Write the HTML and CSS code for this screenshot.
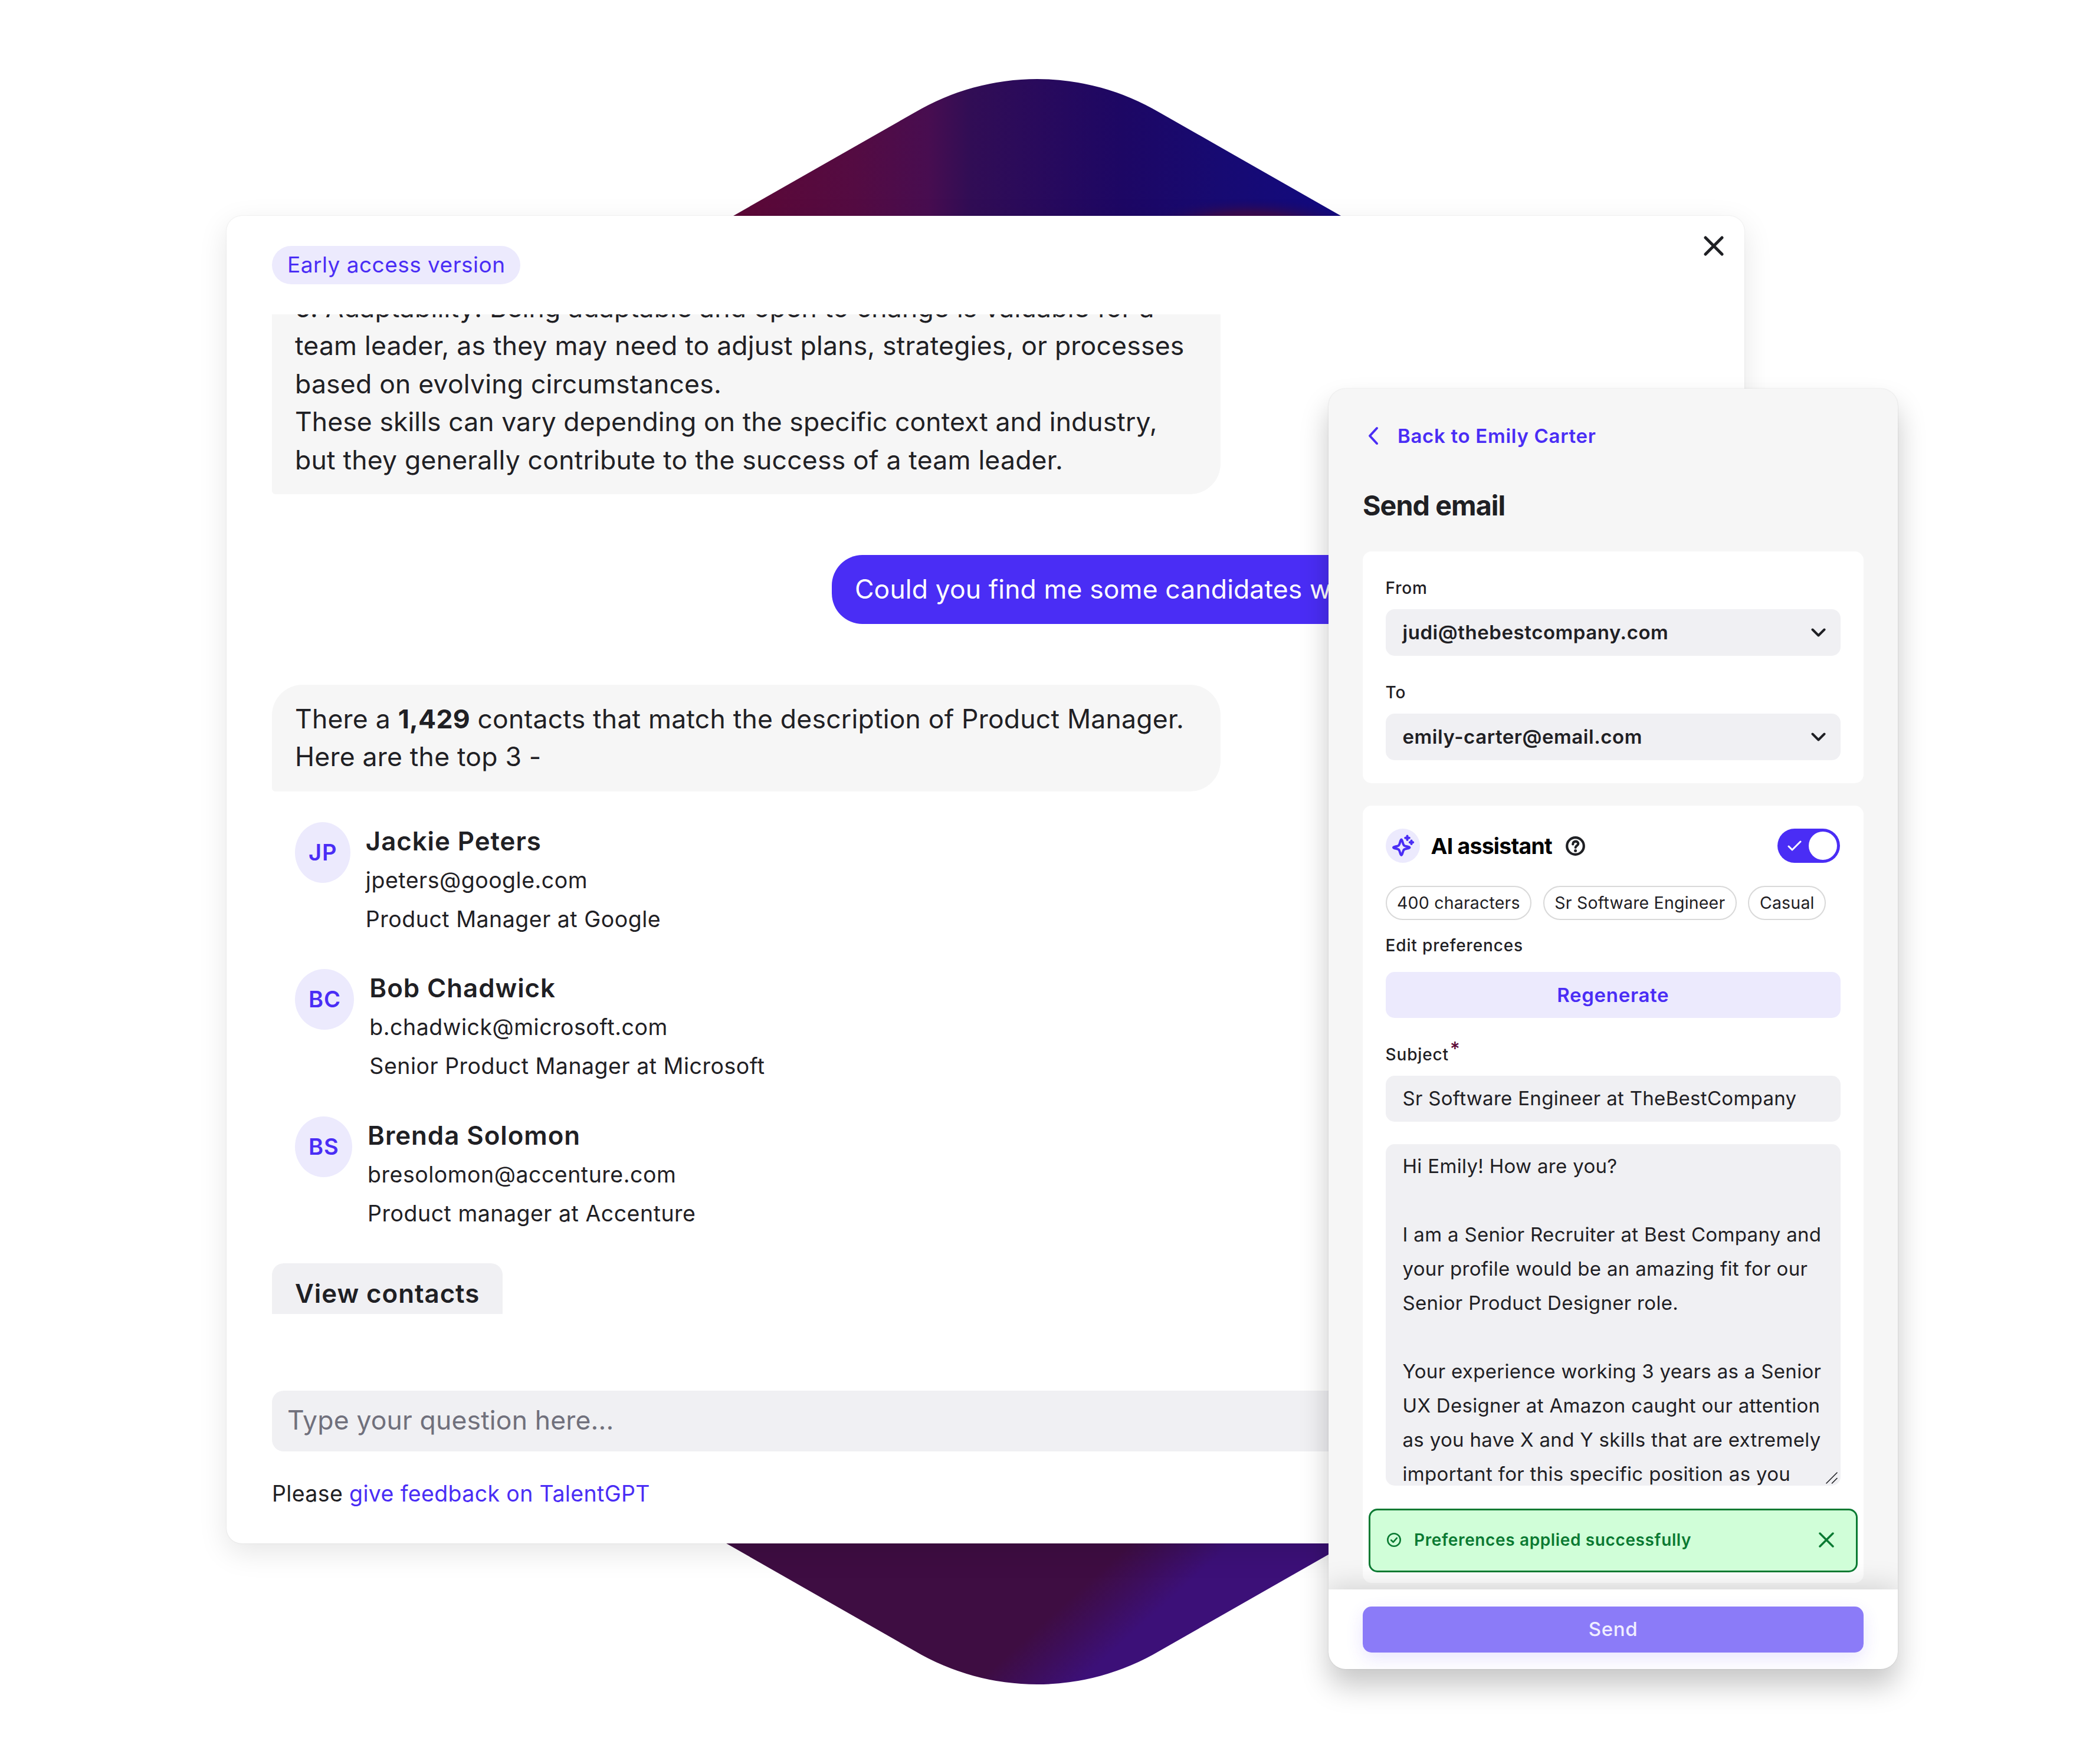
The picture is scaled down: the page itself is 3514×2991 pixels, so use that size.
FILE: index.html
```html
<!DOCTYPE html>
<html lang="en">
<head>
<meta charset="utf-8">
<title>TalentGPT</title>
<link rel="stylesheet" href="styles.css">
</head>
<body>
<main class="stage">
  <svg class="backdrop" viewBox="0 0 3514 2991" aria-hidden="true">
    <defs>
      <linearGradient id="upper" gradientUnits="userSpaceOnUse" x1="1243" y1="0" x2="2273" y2="0">
        <stop offset="0" stop-color="#5c0836"/>
        <stop offset=".2" stop-color="#540b42"/>
        <stop offset=".32" stop-color="#480d50"/>
        <stop offset=".39" stop-color="#310d55"/>
        <stop offset=".5" stop-color="#290a5c"/>
        <stop offset=".64" stop-color="#1d0764"/>
        <stop offset=".8" stop-color="#170a72"/>
        <stop offset="1" stop-color="#120a80"/>
      </linearGradient>
      <linearGradient id="lower" gradientUnits="userSpaceOnUse" x1="1864" y1="2664" x2="1942" y2="2750">
        <stop offset="0" stop-color="#3e0d42"/>
        <stop offset=".5" stop-color="#3d0e5c"/>
        <stop offset="1" stop-color="#3c1078"/>
      </linearGradient>
      <radialGradient id="glow" gradientUnits="userSpaceOnUse" cx="0" cy="0" r="1" gradientTransform="translate(2115 382) scale(180 46)">
        <stop offset="0" stop-color="#560a36"/>
        <stop offset=".5" stop-color="#3c0a48" stop-opacity=".8"/>
        <stop offset="1" stop-color="#1a0a6a" stop-opacity="0"/>
      </radialGradient>
      <clipPath id="hex"><path d="M1550 191A408 408 0 0 1 1966 191L2616 561.500V2428L1966 2799A408 408 0 0 1 1550 2799L900 2428V561.500Z"/></clipPath>
    </defs>
    <g clip-path="url(#hex)">
      <rect x="900" y="100" width="1716" height="1400" fill="url(#upper)"/>
      <rect x="1900" y="320" width="420" height="120" fill="url(#glow)"/>
      <rect x="900" y="1500" width="1716" height="1400" fill="url(#lower)"/>
    </g>
  </svg>

  <section class="chat">
    <header class="chat-head">
      <span class="badge">Early access version</span>
      <svg class="close" viewBox="0 0 34 34"><path d="M3 3L31 31M31 3L3 31"/></svg>
    </header>
    <div class="thread">
      <p class="msg msg-first">5. Adaptability: Being adaptable and open to change is valuable for a<br>team leader, as they may need to adjust plans, strategies, or processes<br>based on evolving circumstances.<br><span class="snug">These skills can vary depending on the specific context and industry,</span><br>but they generally contribute to the success of a team leader.</p>
      <p class="msg msg-own">Could you find me some candidates with</p>
      <p class="msg">There a <b>1,429</b> contacts that match the description of Product Manager.<br>Here are the top 3 -</p>
      <ul class="contacts">
        <li><span class="avatar">JP</span><div><h3>Jackie Peters</h3><p>jpeters@google.com</p><p>Product Manager at Google</p></div></li>
        <li><span class="avatar">BC</span><div><h3>Bob Chadwick</h3><p>b.chadwick@microsoft.com</p><p>Senior Product Manager at Microsoft</p></div></li>
        <li><span class="avatar">BS</span><div><h3>Brenda Solomon</h3><p>bresolomon@accenture.com</p><p>Product manager at Accenture</p></div></li>
      </ul>
      <button class="view">View contacts</button>
    </div>
    <div class="ask">Type your question here...</div>
    <p class="feedback">Please <a>give feedback on TalentGPT</a></p>
  </section>

  <section class="panel">
    <div class="panel-body">
      <a class="back"><svg viewBox="0 0 20 32"><path d="M16 3L4 16L16 29"/></svg><span>Back to Emily Carter</span></a>
      <h2>Send email</h2>
      <div class="card">
        <label class="label">From</label>
        <div class="select"><span>judi@thebestcompany.com</span><svg viewBox="0 0 25 15"><path d="M2.500 2.500L12.500 12.500L22.500 2.500"/></svg></div>
        <label class="label label-next">To</label>
        <div class="select"><span>emily-carter@email.com</span><svg viewBox="0 0 25 15"><path d="M2.500 2.500L12.500 12.500L22.500 2.500"/></svg></div>
      </div>
      <div class="card card-compose">
        <div class="assistant">
          <span class="spark"><svg viewBox="0 0 58 58"><path class="star" d="M26.500 18.500C28.500 18.500 28.500 26 31 28.500C33.500 30.500 40.500 30 40.500 32C40.500 34 33.500 33.500 31 35.500C28.500 38 28.500 45 26.500 45C24.500 45 24.500 38 22 35.500C19.500 33.500 13 34 13 32C13 30 19.500 30.500 22 28.500C24.500 26 24.500 18.500 26.500 18.500Z"/><path d="M36.500 12.500V19M33.200 15.800H39.800M43.500 20.500V26M40.800 23.300H46.200"/></svg></span>
          <h3>AI assistant</h3>
          <svg class="help" viewBox="0 0 33 33"><circle cx="16.500" cy="16.500" r="14.300"/><path d="M12.200 13.400C12.200 7 21.300 7.300 21.300 12.600C21.300 16.200 16.700 15.800 16.700 19"/><circle class="dot" cx="16.600" cy="24.400" r="2.500"/></svg>
          <span class="toggle"><svg viewBox="0 0 24 18"><path d="M2 10L8 16L22 2"/></svg><i></i></span>
        </div>
        <div class="chips"><span>400 characters</span><span>Sr Software Engineer</span><span>Casual</span></div>
        <p class="label edit">Edit preferences</p>
        <button class="regen">Regenerate</button>
        <label class="label subject">Subject<sup>*</sup></label>
        <div class="field">Sr Software Engineer at TheBestCompany</div>
        <div class="message">Hi Emily! How are you?<br><br>I am a Senior Recruiter at Best Company and<br>your profile would be an amazing fit for our<br>Senior Product Designer role.<br><br>Your experience working 3 years as a Senior<br>UX Designer at Amazon caught our attention<br>as you have X and Y skills that are extremely<br>important for this specific position as you<svg class="grip" viewBox="0 0 20 20"><path d="M1 19L19 1M10.500 19L19 10.500"/></svg></div>
      </div>
    </div>
    <div class="toast">
      <svg viewBox="0 0 24 24"><circle cx="12" cy="12" r="10.700"/><path d="M7.200 12.500L10.700 15.800L16.800 8.800"/></svg>
      <span>Preferences applied successfully</span>
      <svg class="x" viewBox="0 0 26 26"><path d="M2 2L24 24M24 2L2 24"/></svg>
    </div>
    <footer class="panel-foot"><button class="send">Send</button></footer>
  </section>
</main>
</body>
</html>
```
FILE: styles.css
```css
* { box-sizing: border-box; margin: 0; padding: 0; }
body { background: #fff; font-family: Inter, "Liberation Sans", sans-serif; color: #1f2024; }
button { border: 0; font: inherit; letter-spacing: inherit; color: inherit; display: block; }
ul { list-style: none; }
svg { display: block; fill: none; stroke: currentColor; stroke-linecap: round; stroke-linejoin: round; flex: none; }
.stage { position: relative; width: 3514px; height: 2991px; overflow: hidden; background: #fff; }
.backdrop { position: absolute; inset: 0; width: 3514px; height: 2991px; stroke: none; }

/* chat window */
.chat { position: absolute; left: 384px; top: 366px; width: 2573px; height: 2251px; padding: 0 77px; border-radius: 26px; background: #fff; box-shadow: 0 15px 50px rgba(0,0,0,.1), 0 0 2px rgba(0,0,0,.12); }
.chat-head { display: flex; justify-content: space-between; align-items: flex-start; height: 167px; padding-top: 34px; margin-right: -42px; }
.badge { margin-top: 17px; height: 65px; line-height: 64px; padding: 0 26px; border-radius: 33px; background: #eceafd; color: #4a2df5; font-size: 37px; letter-spacing: .47px; }
.close { width: 34px; height: 34px; stroke-width: 5; }
.thread { height: 1695px; overflow: hidden; }
.msg { width: 1608px; padding: 26px 39px; font-size: 44.5px; line-height: 64.5px; letter-spacing: .21px; white-space: nowrap; background: #f6f6f6; border-radius: 52px 52px 52px 6px; }
.msg b { font-weight: 650; }
.msg .snug { letter-spacing: .08px; }
.msg-first { margin-top: -69.5px; }
.msg-own { width: 1470px; margin: 103px 0 103px auto; border-radius: 52px 52px 6px 52px; background: #4a2df5; color: #fff; letter-spacing: .1px; }
.contacts { margin-top: 52px; padding-left: 39px; }
.contacts li { display: flex; gap: 26px; height: 249.5px; }
.avatar { height: 103px; line-height: 103px; padding: 0 22.5px 0 23px; border-radius: 50%; background: #eceafd; color: #4a2df5; font-size: 38px; font-weight: 600; letter-spacing: .9px; }
.contacts h3 { margin-bottom: 1px; font-size: 43.8px; line-height: 65px; font-weight: 600; letter-spacing: .95px; }
.contacts p { font-size: 37.5px; line-height: 66px; letter-spacing: .5px; }
.view { height: 103px; padding: 0 39px; border-radius: 20px; background: #f0f0f3; font-size: 43.8px; font-weight: 600; letter-spacing: .95px; }
.ask { margin-top: 130px; height: 103px; line-height: 100px; padding: 0 26px; border-radius: 20px; background: #f0f0f3; color: #70707c; font-size: 44.5px; letter-spacing: .15px; }
.feedback { margin-top: 39px; font-size: 37.5px; line-height: 66px; letter-spacing: .36px; }
.feedback a { color: #4a2df5; }

/* email panel */
.panel { position: absolute; left: 2252px; top: 659px; width: 965px; height: 2171px; display: flex; flex-direction: column; border-radius: 29px; background: #f6f6f6; box-shadow: 0 29px 48px rgba(0,0,0,.22), 0 0 2px rgba(0,0,0,.15); font-size: 33px; letter-spacing: .35px; }
.panel-body { height: 2036px; padding: 49px 58px 0; overflow: hidden; }
.back { display: flex; align-items: center; gap: 31px; height: 62px; padding-left: 8px; color: #4a2df5; font-weight: 600; letter-spacing: .7px; }
.back svg { width: 20px; height: 32px; stroke-width: 4; }
.panel h2 { margin: 57px 0 48px; font-size: 46.6px; line-height: 60px; font-weight: 700; letter-spacing: -.9px; }
.card { padding: 39px 39px 39px 38.5px; margin-bottom: 38px; border-radius: 15px; background: #fff; }
.card-compose { padding-bottom: 165px; }
.label { display: block; height: 46px; line-height: 46px; margin-bottom: 13px; font-size: 28px; font-weight: 500; letter-spacing: .85px; }
.label-next { margin-top: 39px; }
.select { display: flex; justify-content: space-between; align-items: center; height: 79px; padding: 0 25px 1px 29px; border-radius: 15px; background: #f0f0f3; font-weight: 600; letter-spacing: .55px; }
.select svg { width: 25px; height: 15px; stroke-width: 4; }
.assistant { display: flex; align-items: center; height: 58px; }
.spark { width: 58px; height: 58px; border-radius: 50%; background: #eceafd; color: #4a2df5; }
.spark svg { stroke-width: 4; }
.assistant h3 { margin: 0 23px 0 19px; font-size: 37.4px; font-weight: 700; letter-spacing: -.75px; color: #000; }
.help { width: 33px; height: 33px; stroke-width: 4.2; }
.help .dot { fill: currentColor; stroke: none; }
.toggle { display: flex; align-items: center; justify-content: space-between; width: 106px; height: 58px; margin: 0 1px 0 auto; padding: 0 5px 0 17px; border-radius: 29px; background: #4a2df5; color: #fff; }
.toggle svg { width: 24px; height: 18px; stroke-width: 3; }
.toggle i { width: 48px; height: 48px; border-radius: 50%; background: #fff; }
.chips { display: flex; gap: 19.5px; margin-top: 39px; }
.chips span { height: 58px; line-height: 53px; padding: 0 17.500px; border: 2.500px solid #d9d9d9; border-radius: 29px; font-size: 28.500px; letter-spacing: .2px; white-space: nowrap; }
.edit { margin: 20px 0 22px; }
.regen { width: 100%; height: 78px; padding-bottom: 1px; border-radius: 15px; background: #eceafd; color: #4a2df5; font-weight: 600; letter-spacing: .7px; }
.subject { margin-top: 39px; }
.subject sup { margin-left: 2px; font-size: 32px; line-height: 0; vertical-align: 8px; color: #5c0836; }
.field { height: 78px; line-height: 76px; padding: 0 29px; border-radius: 15px; background: #f0f0f3; letter-spacing: .3px; }
.message { position: relative; height: 579px; margin-top: 38px; padding: 8px 29px 0; border-radius: 15px; background: #f0f0f3; line-height: 58px; letter-spacing: .32px; white-space: nowrap; overflow: hidden; }
.grip { position: absolute; right: 5px; bottom: 3px; width: 20px; height: 20px; stroke-width: 1.6; }
.toast { position: absolute; z-index: 2; left: 68px; top: 1899px; width: 829px; height: 108px; display: flex; align-items: center; padding: 0 37px 2px 28px; border: 3px solid #0a7a32; border-radius: 15px; background: #d0fed8; color: #0a7a32; font-size: 28px; font-weight: 600; letter-spacing: .63px; }
.toast svg { width: 24px; height: 24px; margin-right: 22px; stroke-width: 2.600; }
.toast .x { width: 26px; height: 26px; margin: 0 0 0 auto; stroke-width: 3.500; }
.panel-foot { position: relative; height: 135px; padding: 29px 58px 0; border-radius: 0 0 29px 29px; background: #fff; box-shadow: 0 -5px 48px rgba(0,0,0,.15); clip-path: inset(-100px 0 0 0 round 0 0 29px 29px); }
.send { width: 100%; height: 78px; padding-bottom: 2px; border-radius: 15px; background: #8b7bf8; color: #f0eeff; font-weight: 500; letter-spacing: .6px; box-shadow: 0 10px 30px rgba(75,45,245,.12); }
```
